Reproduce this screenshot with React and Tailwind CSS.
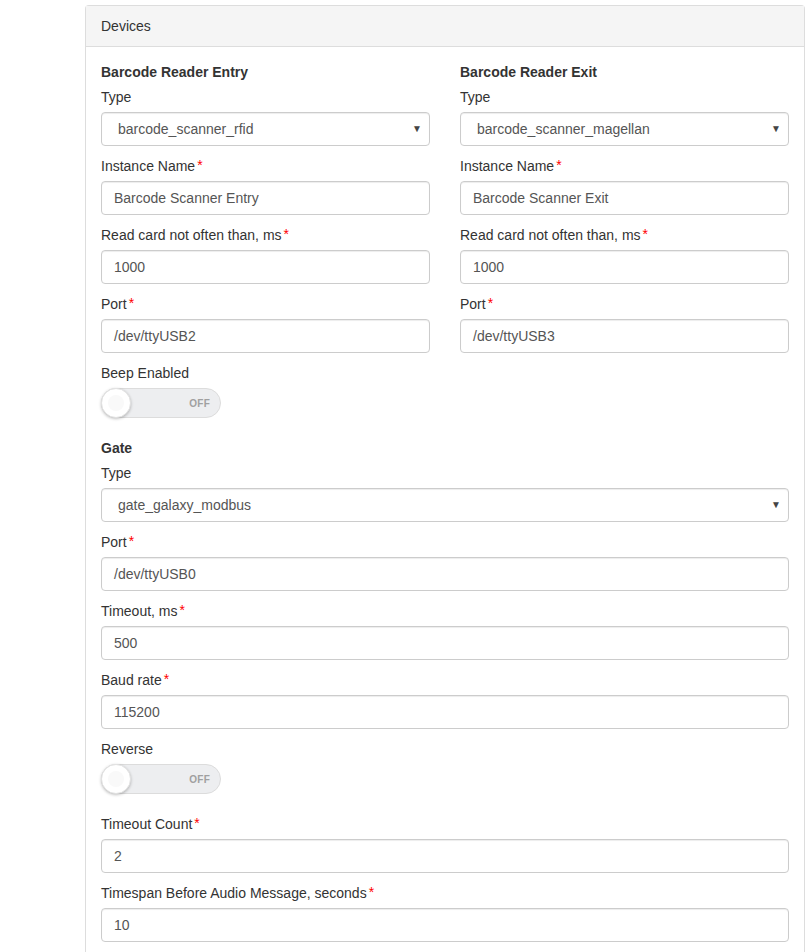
import React from 'react';

const Label = ({ text, required }) => (
  <label className="block h-5 mb-[5px] text-[14px] leading-5 text-[#333]">
    {text}
    {required && <span className="ml-[2px] text-[#ff0000] relative -top-[1px]">*</span>}
  </label>
);

const Input = ({ value }) => (
  <div className="h-[34px] w-full rounded-[4px] border border-[#ccc] bg-white px-3 flex items-center text-[14px] text-[#555] shadow-[inset_0_1px_1px_rgba(0,0,0,0.075)]">
    {value}
  </div>
);

const Select = ({ value }) => (
  <div className="h-[34px] w-full rounded-[4px] border border-[#ccc] bg-white pl-4 pr-[7px] flex items-center justify-between text-[14px] text-[#555] shadow-[inset_0_1px_1px_rgba(0,0,0,0.075)]">
    <span>{value}</span>
    <span className="text-[10px] leading-none text-[#444]">▼</span>
  </div>
);

const Field = ({ label, required, value, select }) => (
  <div className="mb-[10px]">
    <Label text={label} required={required} />
    {select ? <Select value={value} /> : <Input value={value} />}
  </div>
);

const Toggle = ({ label }) => (
  <div className="mb-[20px]">
    <Label text={label} />
    <div className="relative h-[30px] w-[120px] rounded-full border border-[#dcdcdc] bg-[#edeef0] flex items-center justify-end pr-[10px]">
      <span className="text-[10px] font-bold text-[#a0a0a0] tracking-wide">OFF</span>
      <div className="absolute -left-[1px] -top-[1px] h-[30px] w-[30px] rounded-full bg-white border border-[#e2e2e2] shadow-[0_1px_3px_rgba(0,0,0,0.25)] flex items-center justify-center">
        <div className="h-[16px] w-[16px] rounded-full bg-[#f9f9f9]" />
      </div>
    </div>
  </div>
);

const Heading = ({ children }) => (
  <h4 className="h-5 mb-[5px] text-[14px] leading-5 font-bold text-[#333]">{children}</h4>
);

export default function App() {
  return (
    <div className="bg-white min-h-[952px] pt-[5px]" style={{ fontFamily: '"Liberation Sans", Arial, sans-serif' }}>
      <div className="ml-[85px] w-[720px] rounded-t-[4px] border border-[#ddd] border-b-0">
        <div className="px-[15px] py-[10px] bg-[#f5f5f5] border-b border-[#ddd] text-[14px] leading-5 text-[#333]">
          Devices
        </div>
        <div className="p-[15px]">
          <div className="grid grid-cols-2 gap-x-[30px]">
            <div>
              <Heading>Barcode Reader Entry</Heading>
              <Field label="Type" select value="barcode_scanner_rfid" />
              <Field label="Instance Name" required value="Barcode Scanner Entry" />
              <Field label="Read card not often than, ms" required value="1000" />
              <Field label="Port" required value="/dev/ttyUSB2" />
              <Toggle label="Beep Enabled" />
            </div>
            <div>
              <Heading>Barcode Reader Exit</Heading>
              <Field label="Type" select value="barcode_scanner_magellan" />
              <Field label="Instance Name" required value="Barcode Scanner Exit" />
              <Field label="Read card not often than, ms" required value="1000" />
              <Field label="Port" required value="/dev/ttyUSB3" />
            </div>
          </div>
          <Heading>Gate</Heading>
          <Field label="Type" select value="gate_galaxy_modbus" />
          <Field label="Port" required value="/dev/ttyUSB0" />
          <Field label="Timeout, ms" required value="500" />
          <Field label="Baud rate" required value="115200" />
          <Toggle label="Reverse" />
          <Field label="Timeout Count" required value="2" />
          <Field label="Timespan Before Audio Message, seconds" required value="10" />
        </div>
      </div>
    </div>
  );
}
